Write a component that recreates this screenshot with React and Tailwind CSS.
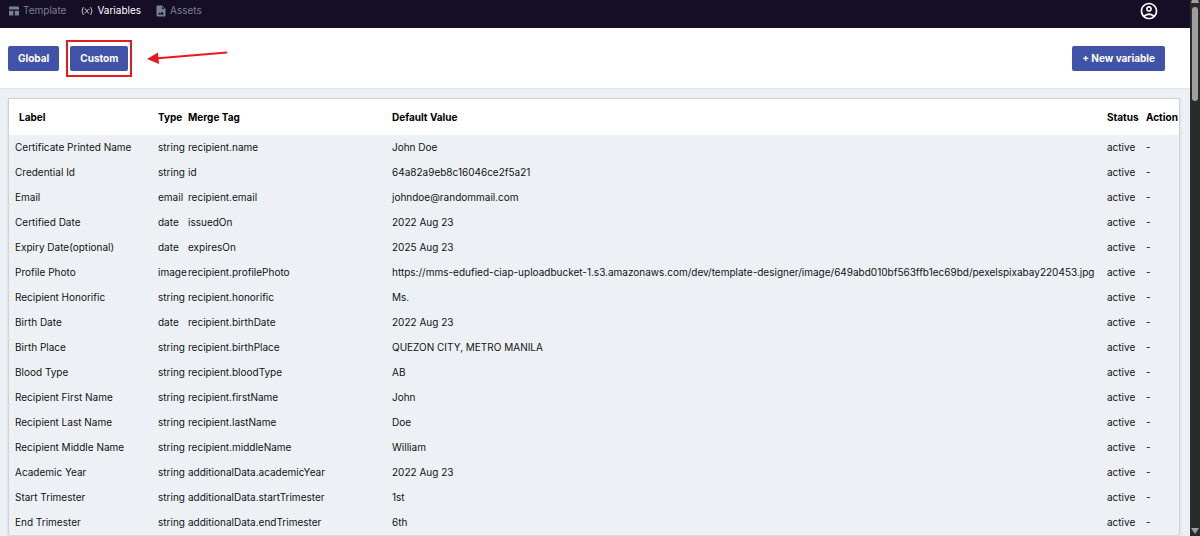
import React, { useState } from "react";
import { MdOutlineAccountCircle } from "react-icons/md";

const variables = [
  { label: "Certificate Printed Name", type: "string", tag: "recipient.name", value: "John Doe" },
  { label: "Credential Id", type: "string", tag: "id", value: "64a82a9eb8c16046ce2f5a21" },
  { label: "Email", type: "email", tag: "recipient.email", value: "johndoe@randommail.com" },
  { label: "Certified Date", type: "date", tag: "issuedOn", value: "2022 Aug 23" },
  { label: "Expiry Date(optional)", type: "date", tag: "expiresOn", value: "2025 Aug 23" },
  {
    label: "Profile Photo",
    type: "image",
    tag: "recipient.profilePhoto",
    value:
      "https://mms-edufied-ciap-uploadbucket-1.s3.amazonaws.com/dev/template-designer/image/649abd010bf563ffb1ec69bd/pexelspixabay220453.jpg",
  },
  { label: "Recipient Honorific", type: "string", tag: "recipient.honorific", value: "Ms." },
  { label: "Birth Date", type: "date", tag: "recipient.birthDate", value: "2022 Aug 23" },
  { label: "Birth Place", type: "string", tag: "recipient.birthPlace", value: "QUEZON CITY, METRO MANILA" },
  { label: "Blood Type", type: "string", tag: "recipient.bloodType", value: "AB" },
  { label: "Recipient First Name", type: "string", tag: "recipient.firstName", value: "John" },
  { label: "Recipient Last Name", type: "string", tag: "recipient.lastName", value: "Doe" },
  { label: "Recipient Middle Name", type: "string", tag: "recipient.middleName", value: "William" },
  { label: "Academic Year", type: "string", tag: "additionalData.academicYear", value: "2022 Aug 23" },
  { label: "Start Trimester", type: "string", tag: "additionalData.startTrimester", value: "1st" },
  { label: "End Trimester", type: "string", tag: "additionalData.endTrimester", value: "6th" },
];

function TemplateIcon() {
  return (
    <svg viewBox="0 0 10 10" className="size-[10px]" fill="currentColor" aria-hidden="true">
      <path d="M0 1.2Q0 .5.7.5H9.3Q10 .5 10 1.2V3.5H0Z" />
      <path d="M0 4.8H4.4V9.5H.7Q0 9.5 0 8.8Z" />
      <path d="M5.8 4.8H10V8.8Q10 9.5 9.3 9.5H5.8Z" />
    </svg>
  );
}

function VariableIcon() {
  return (
    <svg
      viewBox="0 0 12 10"
      className="h-[10px] w-3 text-[#c3c0ca]"
      fill="none"
      stroke="currentColor"
      aria-hidden="true"
    >
      <path d="M2.4 1Q-.4 5 2.4 9M9.6 1Q12.4 5 9.6 9" />
      <path d="M3.6 3.2Q5.1 2.6 5.7 4.5L6.3 6Q6.9 7.5 8.2 6.8M8.4 3.2Q7.3 2.9 6 5T3.6 6.9" />
    </svg>
  );
}

function AssetsIcon() {
  return (
    <svg viewBox="0 0 10 12" className="h-3 w-[10px]" fill="currentColor" aria-hidden="true">
      <path
        fillRule="evenodd"
        d="M1.5.5H6L9.5 4V10.5Q9.5 11.5 8.5 11.5H1.5Q.5 11.5.5 10.5V1.5Q.5.5 1.5.5ZM6 1.5V4H8.5ZM2 9.5H8L6 6.5 4.6 8.4 3.6 7.3Z"
      />
    </svg>
  );
}

const tabs = [
  { name: "Template", icon: TemplateIcon },
  { name: "Variables", icon: VariableIcon },
  { name: "Assets", icon: AssetsIcon },
];

function Navbar() {
  return (
    <header className="flex h-7 shrink-0 items-start justify-between bg-[#160d26] pr-[31px] pl-[9px]">
      <nav className="flex h-[21px] items-center gap-[15px] text-[10px]">
        {tabs.map(({ name, icon: Icon }) => (
          <a
            key={name}
            href="#"
            className={
              name === "Variables"
                ? "flex items-center gap-1 text-white"
                : "flex items-center gap-1 text-[#77818f]"
            }
          >
            <Icon />
            {name}
          </a>
        ))}
      </nav>
      <button aria-label="Account" className="flex h-[21px] items-center text-white">
        <MdOutlineAccountCircle className="size-5" />
      </button>
    </header>
  );
}

function Button({ children, onClick }) {
  return (
    <button
      onClick={onClick}
      className="block h-[25px] rounded-[2px] bg-[#4053a8] px-[10px] text-[10px] font-bold text-white"
    >
      {children}
    </button>
  );
}

function Toolbar({ onSelect }) {
  return (
    <div className="flex h-[60px] shrink-0 items-center justify-between bg-white pr-[25px] pl-2">
      <div className="flex items-center">
        <Button onClick={() => onSelect("global")}>Global</Button>
        <div className="ml-[7px] border-2 border-[#e8191f] px-[2px] py-1">
          <Button onClick={() => onSelect("custom")}>Custom</Button>
        </div>
        <svg viewBox="0 0 82 16" className="ml-[15px] h-4 w-[82px]" aria-hidden="true">
          <path d="M11 8.2 80 2.5" stroke="#e8191f" strokeWidth="2" />
          <path d="M0 9 11 2.5 12 14Z" fill="#e8191f" />
        </svg>
      </div>
      <Button>+ New variable</Button>
    </div>
  );
}

function VariablesTable() {
  return (
    <div className="border border-b-0 border-[#cdd2dc] shadow-sm">
      <table className="w-full table-fixed border-collapse text-left text-[10px] whitespace-nowrap text-[#111]">
        <colgroup>
          <col className="w-[149px]" />
          <col className="w-[30px]" />
          <col className="w-[204px]" />
          <col />
          <col className="w-[39px]" />
          <col className="w-[33px]" />
        </colgroup>
        <thead>
          <tr className="h-9 bg-white font-bold text-black">
            <th className="pl-[10px]">Label</th>
            <th>Type</th>
            <th>Merge Tag</th>
            <th>Default Value</th>
            <th>Status</th>
            <th>Action</th>
          </tr>
        </thead>
        <tbody>
          {variables.map((item) => (
            <tr key={item.label} className="h-[25px]">
              <td className="pl-[6px]">{item.label}</td>
              <td>{item.type}</td>
              <td>{item.tag}</td>
              <td>{item.value}</td>
              <td>active</td>
              <td>-</td>
            </tr>
          ))}
        </tbody>
      </table>
    </div>
  );
}

function Scrollbar() {
  return (
    <div className="flex w-[10px] shrink-0 flex-col items-center bg-[#2b2b2b]" aria-hidden="true">
      <svg viewBox="0 0 8 7" className="h-[7px] w-2" fill="#9f9f9f">
        <path d="M0 3H8L7 0H1Z" />
      </svg>
      <div className="h-[94px] w-[6px] rounded-full bg-[#9f9f9f]" />
      <svg viewBox="0 0 8 6" className="mt-auto mb-[2px] h-[6px] w-2" fill="#9f9f9f">
        <path d="M0 0H8L4 6Z" />
      </svg>
    </div>
  );
}

function App() {
  const [, setScope] = useState("global");

  return (
    <div className="flex h-screen overflow-hidden bg-[#edf1f6] font-['Inter',sans-serif]">
      <div className="flex min-w-0 flex-1 flex-col overflow-hidden">
        <Navbar />
        <Toolbar onSelect={setScope} />
        <main className="border-t border-[#e2e5eb] pt-[9px] pr-[10px] pl-2">
          <VariablesTable />
        </main>
      </div>
      <Scrollbar />
    </div>
  );
}

export default App;
